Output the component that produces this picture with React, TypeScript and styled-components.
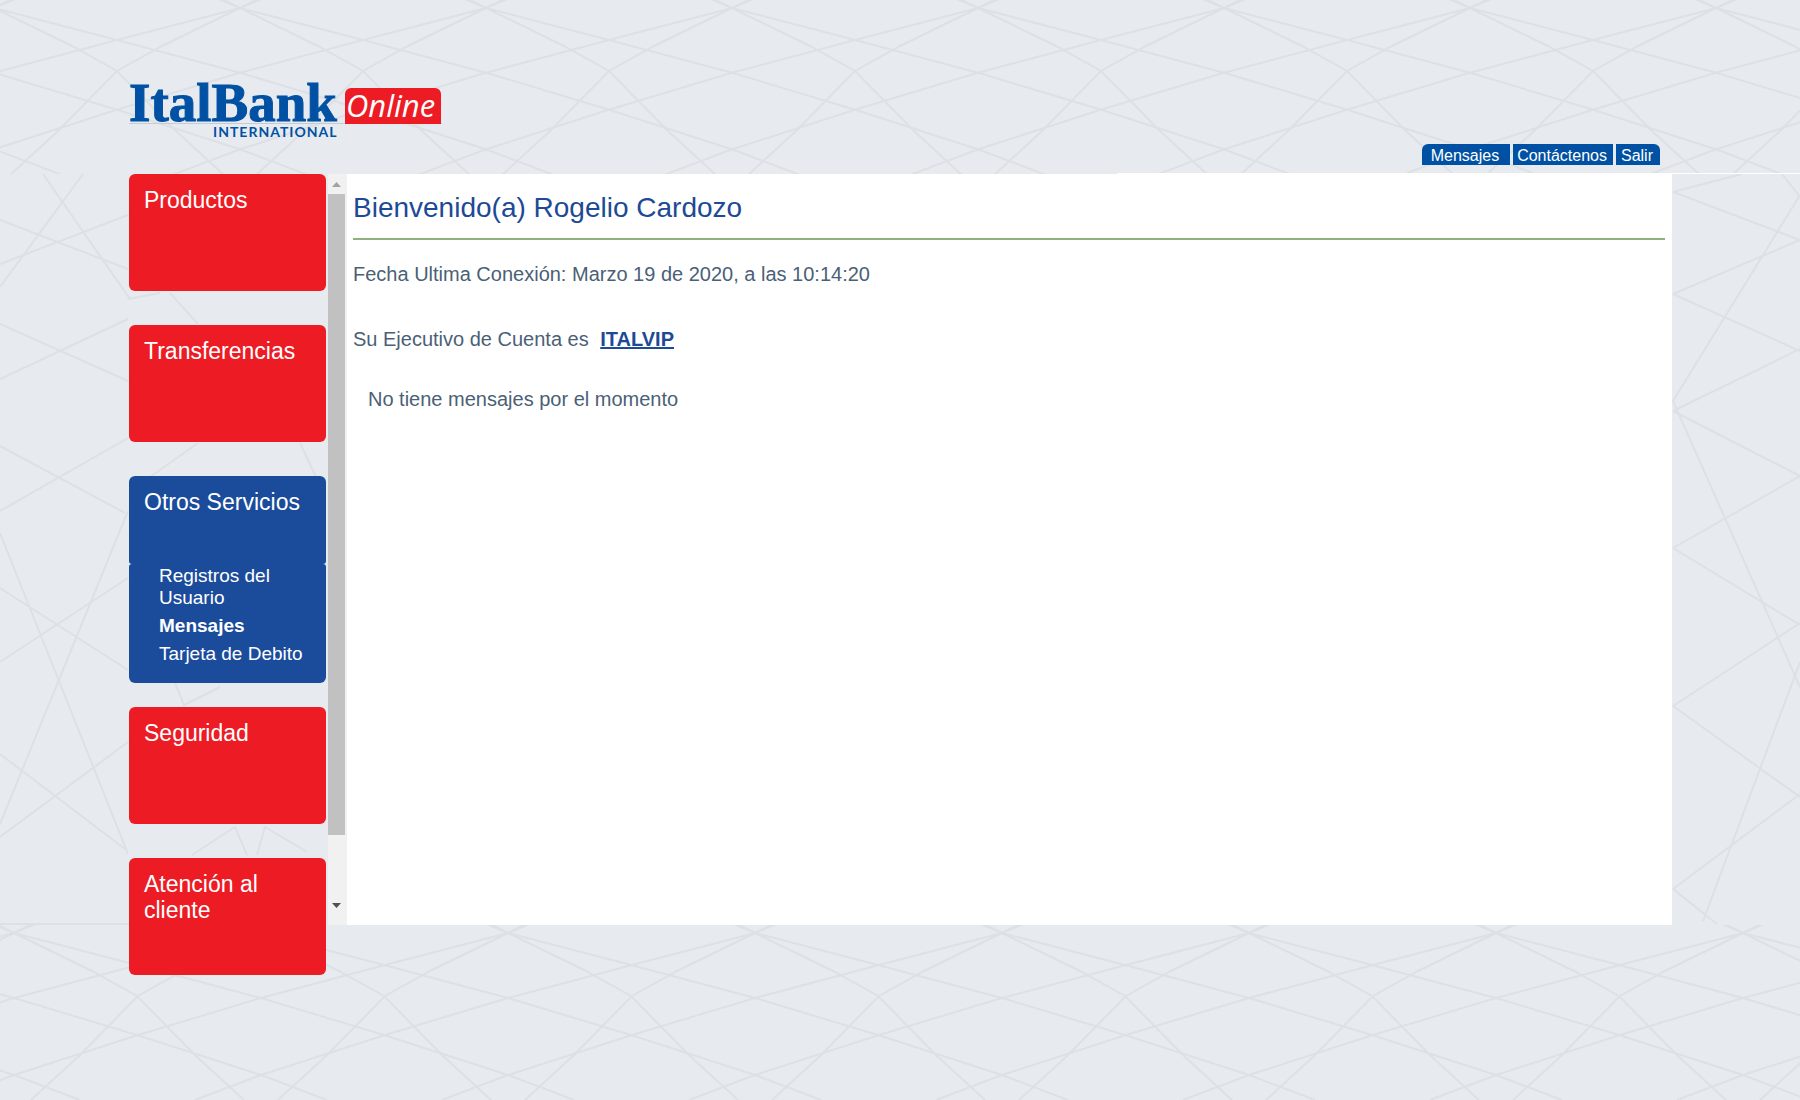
import React from "react";
import styled, { createGlobalStyle } from "styled-components";

const color = {
  red: "#ed1c24",
  blue: "#1b4c9b",
  brand: "#0051a3",
  heading: "#1d4a94",
  text: "#4b5f76",
  rule: "#8fb07f",
  page: "#e7ebef",
  line: "#dde0e4",
};

const GlobalStyle = createGlobalStyle`
  *, *::before, *::after { box-sizing: border-box; }
  body {
    margin: 0;
    background: ${color.page};
    color: ${color.text};
    font-family: "Liberation Sans", Arial, sans-serif;
  }
`;

const Page = styled.div`
  position: relative;
  min-height: 100vh;
  padding: 0 128px 0 129px;
  overflow: hidden;
`;

const Backdrop = styled.svg`
  position: absolute;
  inset: 0;
  width: 100%;
  height: 100%;
  z-index: -1;
`;

const Header = styled.header`
  display: flex;
  justify-content: space-between;
  align-items: flex-end;
  height: 174px;
  padding: 0 12px 9px 0;
`;

const LogoLink = styled.a`
  display: block;
  padding-bottom: 21px;
  line-height: 0;
`;

const TopNav = styled.nav`
  display: flex;
  gap: 3px;
`;

const TopLink = styled.a<{ $first?: boolean; $last?: boolean }>`
  display: block;
  height: 21px;
  padding: ${(p) => (p.$first ? "0 11px 0 9px" : p.$last ? "0 7px 0 5px" : "0 6px 0 4px")};
  border-radius: ${(p) => (p.$first ? "6px 0 0 0" : p.$last ? "0 6px 0 0" : "0")};
  background: ${color.brand};
  color: #fff;
  font-size: 16px;
  line-height: 24px;
  text-decoration: none;
`;

const Body = styled.div`
  display: grid;
  grid-template-columns: 197px 21px minmax(0, 1fr);
  align-items: start;
`;

const Menu = styled.ul`
  display: flex;
  flex-direction: column;
  margin: 0;
  padding: 0;
  list-style: none;
`;

const MenuItem = styled.li<{ $open?: boolean }>`
  margin-bottom: ${(p) => (p.$open ? "24px" : "34px")};
  &:last-child { margin-bottom: 0; }
`;

const CardLink = styled.a<{ $open?: boolean }>`
  display: block;
  height: ${(p) => (p.$open ? "88px" : "117px")};
  padding: 13px 15px;
  border-radius: ${(p) => (p.$open ? "6px 6px 3px 3px" : "6px")};
  background: ${(p) => (p.$open ? color.blue : color.red)};
  color: #fff;
  font-size: 23px;
  line-height: 26px;
  text-decoration: none;
`;

const SubMenu = styled.ul`
  margin: 0;
  padding: 1px 15px 12px 30px;
  border-radius: 3px 3px 6px 6px;
  background: ${color.blue};
  list-style: none;
`;

const SubLink = styled.a<{ $current?: boolean }>`
  display: block;
  padding: 0 0 6px;
  color: #fff;
  font-size: 19px;
  font-weight: ${(p) => (p.$current ? 700 : 400)};
  line-height: 22px;
  text-decoration: none;
`;

const Scroll = styled.div`
  display: flex;
  flex-direction: column;
  height: calc(100vh - 349px);
  margin-left: 2px;
  padding-bottom: 10px;
  background: #f1f1f2;
`;

const ScrollArrow = styled.button`
  display: flex;
  justify-content: center;
  align-items: center;
  width: 17px;
  height: 20px;
  padding: 0;
  border: 0;
  background: transparent;
`;

const ScrollTrack = styled.div`
  flex: 1;
  padding-bottom: 60px;
`;

const ScrollThumb = styled.div`
  width: 17px;
  height: 100%;
  background: #c1c1c1;
`;

const Main = styled.main`
  min-height: calc(100vh - 349px);
  padding: 16px 7px 0 6px;
  background: #fff;
`;

const Title = styled.h1`
  margin: 0 0 22px;
  padding-bottom: 12px;
  border-bottom: 2px solid ${color.rule};
  color: ${color.heading};
  font-size: 28px;
  font-weight: 400;
  line-height: 36px;
`;

const Text = styled.p`
  margin: 0 0 41px;
  font-size: 20px;
  line-height: 24px;
`;

const Notice = styled(Text)`
  margin-top: -5px;
  padding-left: 15px;
`;

const Executive = styled.a`
  margin-left: 6px;
  color: ${color.heading};
  font-weight: 700;
`;

/* One star of the mesh: shallow rays that flatten outwards and two steep rays. */
const STAR =
  "M-33 -14L0 0L123 32L247 65L370 102L494 142L560 167" +
  "M33 -14L0 0L-123 32L-247 65L-370 102L-494 142L-560 167" +
  "M-20 -10L0 0L78 38L123 63L182 123L230 167" +
  "M20 -10L0 0L-78 38L-123 63L-182 123L-230 167";

const LEFT_LINES =
  "M43 174L130 299M0 287L83 174M0 220L128 269M0 264L128 215M0 324L128 381M0 379L128 319" +
  "M0 446L125 513M0 511L128 438M0 533L128 854M0 824L128 511M0 588L128 670M0 662L128 578" +
  "M0 754L125 849M0 837L128 742M0 924H129" +
  "M128 299L160 293M170 293L198 324M192 855L235 827L247 855M257 855L265 827L307 852" +
  "M198 443L150 477M300 443L316 477M175 683L184 705L220 687";

const RIGHT_LINES =
  "M-127 192L-58 174M-127 192L0 240M0 195L-127 401M-18 174L0 197M-127 294L0 240M-127 294L0 351" +
  "M-127 411L0 349M-127 411L0 476M-127 401L0 687M-127 548L0 476M-127 548L0 625M-127 706L0 623" +
  "M-127 706L0 797M-97 921L0 662M-127 889L0 794M-127 889L-83 924";

const columns = [-3, -2, -1, 0, 1, 2, 3, 4, 5, 6, 7, 8, 9, 10];

function Mesh() {
  return (
    <Backdrop aria-hidden="true" fill="none" stroke={color.line} strokeWidth="2">
      <defs>
        <clipPath id="top"><rect width="100%" height="174" /></clipPath>
        <clipPath id="bottom"><rect y="925" width="100%" height="100%" /></clipPath>
      </defs>
      <g clipPath="url(#top)">
        {columns.map((c) => (
          <path key={c} d={STAR} transform={`translate(${-6 + c * 246} 8)`} />
        ))}
      </g>
      <g clipPath="url(#bottom)">
        {columns.map((c) => (
          <path key={c} d={STAR} transform={`translate(${14 + c * 247} 933)`} />
        ))}
      </g>
      <path d={LEFT_LINES} />
      <svg x="100%" overflow="visible">
        <path d={RIGHT_LINES} />
        <path d="M-682 173.500H0" stroke="#fff" strokeWidth="1" />
      </svg>
    </Backdrop>
  );
}

function Logo() {
  return (
    <svg width="314" height="80" role="img" aria-label="ItalBank International Online">
      <path d="M0 59.500H313" stroke="#c5cbd2" />
      <text x="0" y="57" fill={color.brand} stroke={color.brand} strokeWidth="1" fontFamily="'Liberation Serif', serif" fontWeight="700" fontSize="55">
        ItalBank
      </text>
      <text x="84" y="73" fill={color.brand} fontFamily="Lato, sans-serif" fontWeight="700" fontSize="14" letterSpacing="1">
        INTERNATIONAL
      </text>
      <path d="M216 60V30a6 6 0 0 1 6-6h84a6 6 0 0 1 6 6v30z" fill={color.red} />
      <text x="217" y="53" fill="#fff" fontFamily="'Open Sans', sans-serif" fontStyle="italic" fontSize="31">
        Online
      </text>
    </svg>
  );
}

const sections: { label: string; children?: { label: string; current?: boolean }[] }[] = [
  { label: "Productos" },
  { label: "Transferencias" },
  {
    label: "Otros Servicios",
    children: [
      { label: "Registros del Usuario" },
      { label: "Mensajes", current: true },
      { label: "Tarjeta de Debito" },
    ],
  },
  { label: "Seguridad" },
  { label: "Atención al cliente" },
];

export default function App() {
  return (
    <Page>
      <GlobalStyle />
      <Mesh />
      <Header>
        <LogoLink href="#inicio"><Logo /></LogoLink>
        <TopNav>
          <TopLink $first href="#mensajes">Mensajes</TopLink>
          <TopLink href="#contactenos">Contáctenos</TopLink>
          <TopLink $last href="#salir">Salir</TopLink>
        </TopNav>
      </Header>
      <Body>
        <nav>
          <Menu>
            {sections.map((s) => (
              <MenuItem key={s.label} $open={!!s.children}>
                <CardLink href="#menu" $open={!!s.children}>{s.label}</CardLink>
                {s.children && (
                  <SubMenu>
                    {s.children.map((c) => (
                      <li key={c.label}>
                        <SubLink href="#servicio" $current={c.current}>{c.label}</SubLink>
                      </li>
                    ))}
                  </SubMenu>
                )}
              </MenuItem>
            ))}
          </Menu>
        </nav>
        <Scroll>
          <ScrollArrow type="button" aria-label="Subir">
            <svg width="9" height="5"><path d="M0 5L4.500 0L9 5z" fill="#a3a3a3" /></svg>
          </ScrollArrow>
          <ScrollTrack><ScrollThumb /></ScrollTrack>
          <ScrollArrow type="button" aria-label="Bajar">
            <svg width="9" height="5"><path d="M0 0H9L4.500 5z" fill="#505050" /></svg>
          </ScrollArrow>
        </Scroll>
        <Main>
          <Title>Bienvenido(a) Rogelio Cardozo</Title>
          <Text>Fecha Ultima Conexión: Marzo 19 de 2020, a las 10:14:20</Text>
          <Text>
            Su Ejecutivo de Cuenta es <Executive href="#ejecutivo">ITALVIP</Executive>
          </Text>
          <Notice>No tiene mensajes por el momento</Notice>
        </Main>
      </Body>
    </Page>
  );
}
